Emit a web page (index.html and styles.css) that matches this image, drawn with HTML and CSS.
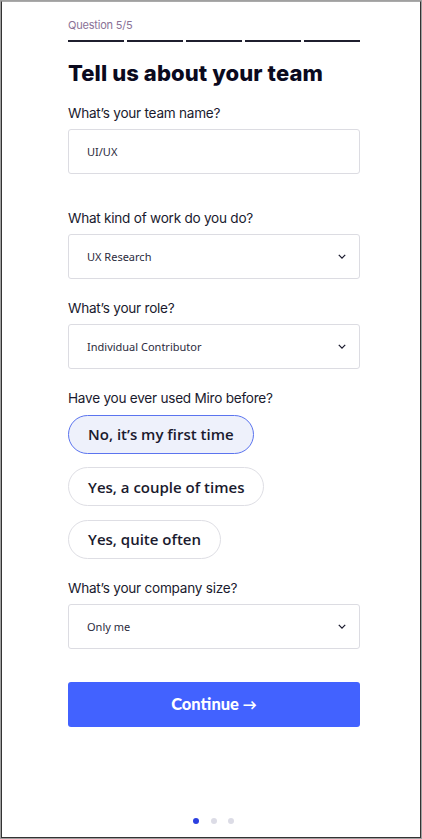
FILE: index.html
```html
<!DOCTYPE html>
<html lang="en">
<head>
<meta charset="utf-8">
<title>Tell us about your team</title>
<link rel="stylesheet" href="styles.css">
</head>
<body>
<div class="frame">
  <main class="form">
    <div class="step">Question 5/5</div>
    <div class="progress">
      <span></span><span></span><span></span><span></span><span></span>
    </div>
    <h1 class="title">Tell us about your team</h1>

    <div class="field first">
      <label class="label">What’s your team name?</label>
      <div class="input">UI/UX</div>
    </div>

    <div class="field gap-lg">
      <label class="label">What kind of work do you do?</label>
      <div class="input select">UX Research
        <svg class="chev" viewBox="0 0 10 6" width="8" height="5"><path d="M1 1l4 4 4-4" fill="none" stroke="#1a1a2e" stroke-width="1.6"/></svg>
      </div>
    </div>

    <div class="field">
      <label class="label">What’s your role?</label>
      <div class="input select">Individual Contributor
        <svg class="chev" viewBox="0 0 10 6" width="8" height="5"><path d="M1 1l4 4 4-4" fill="none" stroke="#1a1a2e" stroke-width="1.6"/></svg>
      </div>
    </div>

    <div class="field">
      <label class="label">Have you ever used Miro before?</label>
      <div class="pills">
        <button class="pill active">No, it’s my first time</button>
        <button class="pill">Yes, a couple of times</button>
        <button class="pill">Yes, quite often</button>
      </div>
    </div>

    <div class="field after-pills">
      <label class="label">What’s your company size?</label>
      <div class="input select">Only me
        <svg class="chev" viewBox="0 0 10 6" width="8" height="5"><path d="M1 1l4 4 4-4" fill="none" stroke="#1a1a2e" stroke-width="1.6"/></svg>
      </div>
    </div>

    <button class="continue">Continue <span class="arrow">→</span></button>
  </main>
  <div class="dots"><span class="on"></span><span></span><span></span></div>
</div>
</body>
</html>
```
FILE: styles.css
```css
* { box-sizing: border-box; }
html, body { margin: 0; padding: 0; }
body {
  background: #a0a0a0;
  padding: 1px;
  font-family: "Noto Sans", "Open Sans", sans-serif;
  color: #1a1a2e;
}
.frame {
  height: 837px;
  background: #fff;
  border: 1px solid #333;
  border-top-color: #aaa;
  display: flex;
  flex-direction: column;
  align-items: flex-start;
}
.form {
  width: 292px;
  margin-left: 66px;
  padding-top: 16px;
  display: flex;
  flex-direction: column;
}
.step {
  font-family: "Inter", "Noto Sans", sans-serif;
  font-size: 11px;
  color: #8a7196;
  line-height: 14px;
  letter-spacing: -0.2px;
}
.progress {
  display: flex;
  gap: 3px;
  margin-top: 8px;
}
.progress span {
  flex: 1;
  height: 1.5px;
  background: #1f1f2e;
}
.title {
  margin: 17px 0 0;
  font-family: "Inter", sans-serif;
  font-weight: 800;
  font-size: 22px;
  line-height: 28px;
  letter-spacing: 0.1px;
  color: #0b0a1e;
}
.field { display: flex; flex-direction: column; margin-top: 20px; }
.field.first { margin-top: 17px; }
.field.gap-lg { margin-top: 35px; }
.field.after-pills { margin-top: 20px; }
.label {
  font-family: "Inter", sans-serif;
  font-size: 13.6px;
  line-height: 18px;
  letter-spacing: -0.25px;
  color: #1a1a2e;
  margin-bottom: 7px;
}
.input {
  height: 45px;
  border: 1px solid #dcdce2;
  border-radius: 3px;
  padding: 0 18px;
  display: flex;
  align-items: center;
  font-size: 11px;
  color: #2b2b3d;
}
.select { justify-content: space-between; }
.chev { margin-right: -5px; }
.pills { display: flex; flex-direction: column; align-items: flex-start; gap: 13.5px; margin-top: 1px; }
.pill {
  font-family: "Open Sans", sans-serif;
  font-weight: 600;
  font-size: 15px;
  color: #1a1a2e;
  height: 39px;
  padding: 0 19px;
  border-radius: 20px;
  border: 1px solid #dedee4;
  background: #fff;
}
.pill.active {
  background: #eef1fb;
  border-color: #5b74ef;
}
.continue {
  margin-top: 33px;
  height: 45px;
  border: none;
  border-radius: 3px;
  background: #4262ff;
  color: #fff;
  font-family: "Lato", sans-serif;
  font-weight: 900;
  font-size: 16.5px;
}
.arrow { font-size: 14px; }
.dots {
  margin-top: auto;
  margin-bottom: 13px;
  margin-left: 191px;
  display: flex;
  gap: 11.5px;
}
.dots span { width: 6px; height: 6px; border-radius: 50%; background: #dcdce6; }
.dots span.on { background: #2b3fe0; }
```
